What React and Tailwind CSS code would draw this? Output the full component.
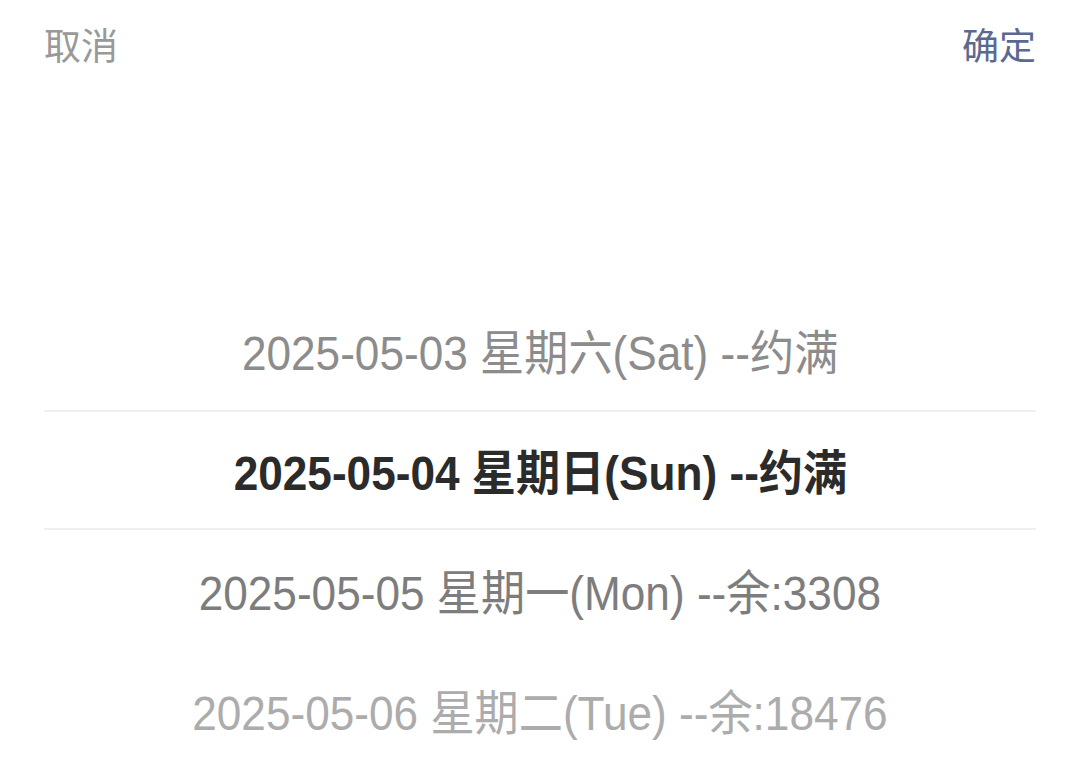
import React, { useState } from "react";

const days = [
  { date: "2025-05-03", week: "星期六(Sat)", left: "--约满" },
  { date: "2025-05-04", week: "星期日(Sun)", left: "--约满" },
  { date: "2025-05-05", week: "星期一(Mon)", left: "--余:3308" },
  { date: "2025-05-06", week: "星期二(Tue)", left: "--余:18476" },
];

const shade = ["text-[#8c8c8c]", "text-[#7d7d7d]", "text-[#acacac]"];

function App() {
  const [selected] = useState(1);

  return (
    <div
      className="w-[1080px] h-[773px] bg-white overflow-hidden"
      style={{ fontFamily: '"Liberation Sans", "Noto Sans CJK SC", sans-serif' }}
    >
      {/* header */}
      <div className="h-[95px] flex items-center justify-between px-[44px]">
        <button className="text-[37px] leading-none text-[#999999]">取消</button>
        <button className="text-[37px] leading-none text-[#5b6990]">确定</button>
      </div>

      {/* picker */}
      <div className="mt-[195px] px-[44px]">
        {days.map((d, i) => {
          const isSel = i === selected;
          let color = "text-[#2b2b2b] font-bold";
          if (!isSel) {
            if (i < selected) color = shade[0];
            else if (i === selected + 1) color = shade[1];
            else color = shade[2];
          }
          return (
            <div
              key={d.date}
              className={
                "h-[120px] pt-[8px] flex items-center justify-center " +
                (isSel ? "border-y-2 border-[#efefef]" : "")
              }
            >
              <span
                className={"block whitespace-nowrap text-[48px] leading-none scale-x-[0.92] " + color}
              >
                {d.date} {d.week} {d.left}
              </span>
            </div>
          );
        })}
      </div>
    </div>
  );
}

export default App;
